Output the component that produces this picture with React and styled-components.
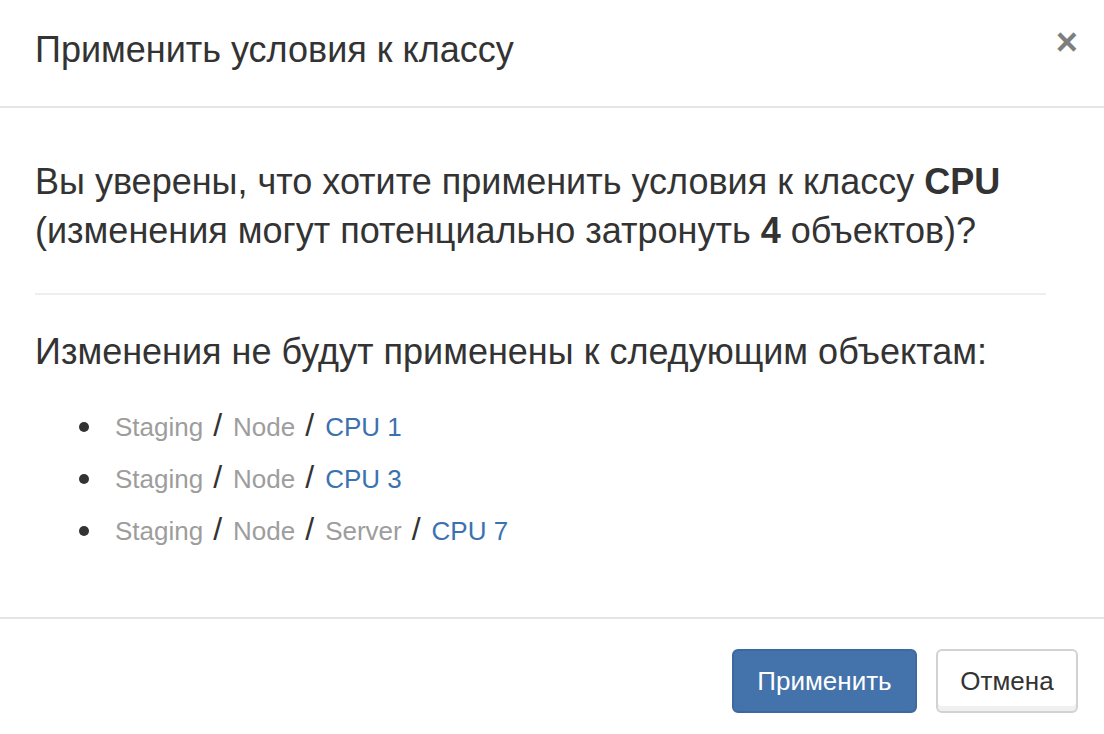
import React from "react";
import styled, { createGlobalStyle } from "styled-components";

const GlobalStyle = createGlobalStyle`
  html, body {
    margin: 0;
    padding: 0;
    background: #fff;
  }
  body {
    font-family: "Liberation Sans", Arial, Helvetica, sans-serif;
    color: #333;
  }
`;

const Modal = styled.div`
  width: 1104px;
  height: 734px;
  display: flex;
  flex-direction: column;
  background: #fff;
  overflow: hidden;
`;

const Header = styled.div`
  display: flex;
  align-items: flex-start;
  justify-content: space-between;
  height: 106px;
  padding: 0 26px 0 35px;
  border-bottom: 2px solid #e5e5e5;
`;

const Title = styled.h4`
  margin: 0;
  padding-top: 29px;
  font-size: 36px;
  font-weight: normal;
  line-height: 42px;
  color: #333;
`;

const CloseButton = styled.button`
  margin-top: 24px;
  padding: 0;
  border: 0;
  background: none;
  font-family: "Liberation Sans", Arial, sans-serif;
  font-size: 38px;
  font-weight: bold;
  line-height: 36px;
  color: #000;
  opacity: 0.5;
  cursor: pointer;
`;

const Body = styled.div`
  flex: 1;
  padding: 49px 58px 0 35px;
`;

const Text = styled.p`
  margin: 0;
  font-size: 36px;
  line-height: 49px;
`;

const Divider = styled.hr`
  margin: 38px 0 32px;
  border: 0;
  border-top: 2px solid #eee;
`;

const List = styled.ul`
  margin: 25px 0 0;
  padding: 0 0 0 80px;
  list-style: none;
`;

const Item = styled.li`
  position: relative;
  font-size: 26px;
  line-height: 52px;
  height: 52px;

  &::before {
    content: "";
    position: absolute;
    left: -36px;
    top: 21px;
    width: 10px;
    height: 10px;
    border-radius: 50%;
    background: #333;
  }
`;

const Crumb = styled.span`
  color: ${(p) => (p.$link ? "#3a72b0" : "#9d9d9d")};
`;

const Sep = styled.span`
  font-size: 32px;
  line-height: 1;
  color: #333;
  margin: 0 11px 0 10px;
`;

const Footer = styled.div`
  display: flex;
  justify-content: flex-end;
  gap: 19px;
  height: 117px;
  padding: 30px 26px 0 0;
  border-top: 2px solid #e5e5e5;
  box-sizing: border-box;
`;

const Button = styled.button`
  height: 64px;
  padding: 0;
  border-radius: 6px;
  font-family: "Liberation Sans", Arial, sans-serif;
  font-size: 26px;
  cursor: pointer;
  border: 2px solid ${(p) => (p.$primary ? "#3d6a9e" : "#d2d2d2")};
  background: ${(p) => (p.$primary ? "#4373aa" : "#fff")};
  color: ${(p) => (p.$primary ? "#fff" : "#333")};
  box-shadow: ${(p) => (p.$primary ? "none" : "inset 0 -5px 0 #f0f0f0")};
  width: ${(p) => (p.$primary ? "185px" : "142px")};
`;

const items = [
  ["Staging", "Node", "CPU 1"],
  ["Staging", "Node", "CPU 3"],
  ["Staging", "Node", "Server", "CPU 7"],
];

export default function App() {
  return (
    <>
      <GlobalStyle />
      <Modal>
        <Header>
          <Title>Применить условия к классу</Title>
          <CloseButton aria-label="Закрыть">×</CloseButton>
        </Header>
        <Body>
          <Text>
            Вы уверены, что хотите применить условия к классу <b>CPU</b>
            <br />
            (изменения могут потенциально затронуть <b>4</b> объектов)?
          </Text>
          <Divider />
          <Text>Изменения не будут применены к следующим объектам:</Text>
          <List>
            {items.map((path, i) => (
              <Item key={i}>
                {path.map((part, j) => (
                  <React.Fragment key={j}>
                    {j > 0 && <Sep>/</Sep>}
                    <Crumb $link={j === path.length - 1}>{part}</Crumb>
                  </React.Fragment>
                ))}
              </Item>
            ))}
          </List>
        </Body>
        <Footer>
          <Button $primary>Применить</Button>
          <Button>Отмена</Button>
        </Footer>
      </Modal>
    </>
  );
}
